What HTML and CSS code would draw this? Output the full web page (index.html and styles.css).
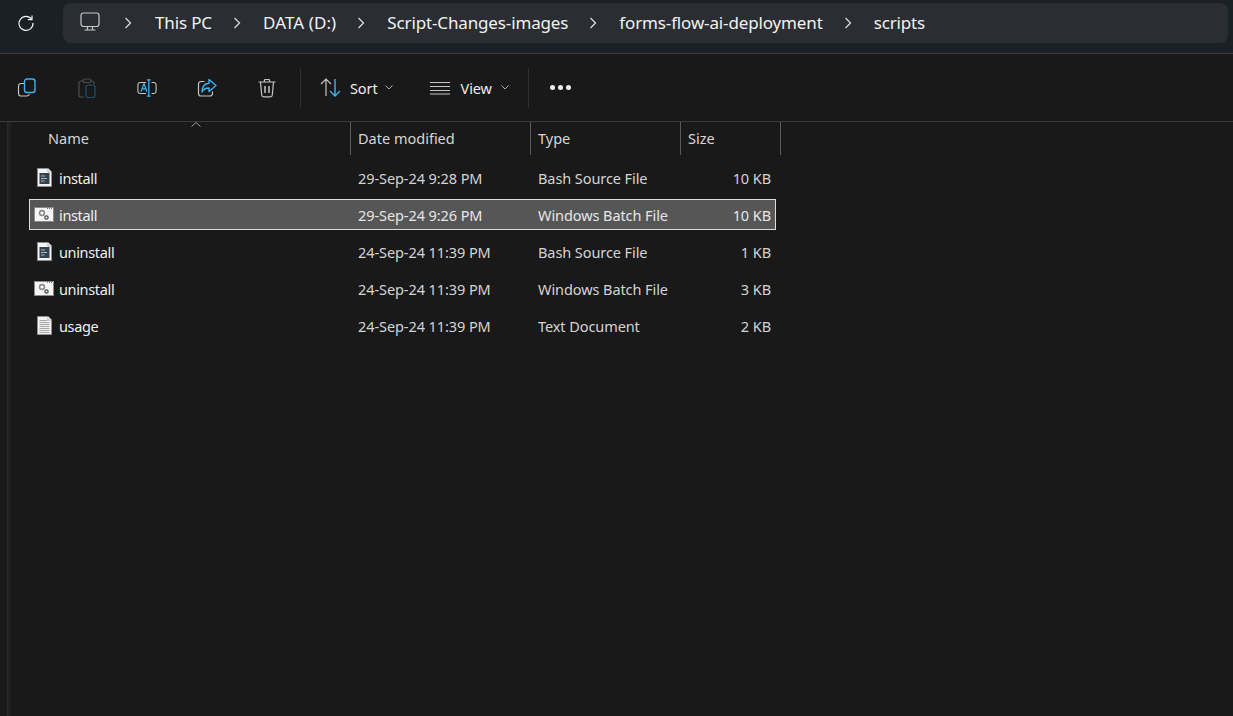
FILE: index.html
```html
<!DOCTYPE html>
<html lang="en">
<head>
<meta charset="utf-8">
<title>scripts</title>
<link rel="stylesheet" href="styles.css">
</head>
<body>
<div class="window">
  <header class="topbar">
    <button class="refresh" aria-label="Refresh">
      <svg width="18" height="18" viewBox="0 0 18 18" fill="none" stroke="#f0f0f0" stroke-width="1.2"><path d="M14.6 5.2A7 7 0 1 0 16 9"/><path d="M15 1.4v4.2h-4.2"/></svg>
    </button>
    <nav class="address">
      <svg class="pc" width="20" height="20" viewBox="0 0 20 20" fill="none" stroke="#c8c8c8" stroke-width="1.2"><rect x="1" y="1" width="18" height="13.5" rx="2.5"/><path d="M7.5 14.5v3M12.5 14.5v3M4.5 18h11"/></svg>
      <svg class="chev first" width="8" height="12" viewBox="0 0 8 12" fill="none" stroke="#d8d8d8" stroke-width="1.3"><path d="M1.5 1l5 5-5 5"/></svg>
      <span class="crumb">This PC</span>
      <svg class="chev" width="8" height="12" viewBox="0 0 8 12" fill="none" stroke="#d8d8d8" stroke-width="1.3"><path d="M1.5 1l5 5-5 5"/></svg>
      <span class="crumb drive">DATA (D:)</span>
      <svg class="chev" width="8" height="12" viewBox="0 0 8 12" fill="none" stroke="#d8d8d8" stroke-width="1.3"><path d="M1.5 1l5 5-5 5"/></svg>
      <span class="crumb">Script-Changes-images</span>
      <svg class="chev" width="8" height="12" viewBox="0 0 8 12" fill="none" stroke="#d8d8d8" stroke-width="1.3"><path d="M1.5 1l5 5-5 5"/></svg>
      <span class="crumb">forms-flow-ai-deployment</span>
      <svg class="chev" width="8" height="12" viewBox="0 0 8 12" fill="none" stroke="#d8d8d8" stroke-width="1.3"><path d="M1.5 1l5 5-5 5"/></svg>
      <span class="crumb">scripts</span>
    </nav>
  </header>

  <section class="toolbar">
    <div class="tool-group">
      <button class="tool" aria-label="Copy">
        <svg width="20" height="20" viewBox="0 0 20 20" fill="none" stroke-width="1.2"><path d="M7 5.500H3.500A2.500 2.500 0 0 0 1.500 8v7.500A2.500 2.500 0 0 0 3.500 18H10a2.500 2.500 0 0 0 2.400-2" stroke="#c4c4c4"/><rect x="7.500" y="1" width="10.500" height="13.500" rx="2.500" stroke="#3db2f5" stroke-width="1.400"/></svg>
      </button>
      <button class="tool" aria-label="Paste">
        <svg width="20" height="20" viewBox="0 0 20 20" fill="none" stroke-width="1.2"><path d="M7 3H4a2 2 0 0 0-2 2v12a2 2 0 0 0 2 2h3M13 3h2a2 2 0 0 1 2 2v1" stroke="#4d4d4d"/><rect x="6" y="1" width="8" height="3.500" rx="1.500" stroke="#4d4d4d"/><rect x="9" y="7" width="9" height="12.500" rx="2" stroke="#1d5370"/></svg>
      </button>
      <button class="tool" aria-label="Rename">
        <svg width="22" height="20" viewBox="0 0 22 20" fill="none" stroke-width="1.2"><path d="M10 4H3.500A2.500 2.500 0 0 0 1 6.500v7A2.500 2.500 0 0 0 3.500 16H10M16 4h2.500A2.500 2.500 0 0 1 21 6.500v7a2.500 2.500 0 0 1-2.500 2.500H16" stroke="#c4c4c4"/><path d="M11 1h4M13 1v18M11 19h4" stroke="#3db2f5" stroke-width="1.400"/><path d="M4.500 14l3-8.500h.4l3 8.500M5.500 11h4.800" stroke="#3db2f5" stroke-width="1.400"/></svg>
      </button>
      <button class="tool" aria-label="Share">
        <svg width="20" height="20" viewBox="0 0 20 20" fill="none" stroke-width="1.2"><path d="M7.500 3.500H4A2.500 2.500 0 0 0 1.500 6v9.500A2.500 2.500 0 0 0 4 18h9a2.500 2.500 0 0 0 2.500-2.500v-2" stroke="#c4c4c4"/><path d="M12 1.500l7 6-7 6V10c-3.500 0-5.500 1-7 4 0-5 2.500-8.500 7-8.800z" stroke="#3db2f5" stroke-width="1.400" stroke-linejoin="round"/></svg>
      </button>
      <button class="tool" aria-label="Delete">
        <svg width="18" height="20" viewBox="0 0 18 20" fill="none" stroke="#c4c4c4" stroke-width="1.2"><path d="M.5 4h17M6 4l.8-2.500h4.400L12 4M2.500 4l1.200 13a2 2 0 0 0 2 1.800h6.600a2 2 0 0 0 2-1.800L15.500 4"/><path d="M7 8v7M11 8v7" stroke-width="1.500"/></svg>
      </button>
    </div>
    <span class="divider"></span>
    <button class="menu sort">
      <svg width="21" height="19" viewBox="0 0 21 19" fill="none" stroke-width="1.2"><path d="M6 18V1M1 6l5-5 5 5" stroke="#c4c4c4"/><path d="M15 1v17M10 13l5 5 5-5" stroke="#3db2f5" stroke-width="1.400"/></svg>
      <span>Sort</span>
      <svg class="caret" width="8" height="5" viewBox="0 0 8 5" fill="none" stroke="#a8a8a8"><path d="M.5.500L4 4l3.500-3.500"/></svg>
    </button>
    <button class="menu view">
      <svg width="20" height="14" viewBox="0 0 20 14" fill="none" stroke="#c4c4c4"><path d="M0 1.500h20M0 5.500h20M0 9.500h20M0 13h20"/></svg>
      <span>View</span>
      <svg class="caret" width="8" height="5" viewBox="0 0 8 5" fill="none" stroke="#a8a8a8"><path d="M.5.500L4 4l3.500-3.500"/></svg>
    </button>
    <span class="divider"></span>
    <button class="more" aria-label="More options"><i></i><i></i><i></i></button>
  </section>

  <main class="files">
    <div class="rule"></div>
    <div class="list">
      <div class="head">
        <div class="col name">Name<svg class="sort-mark" width="10" height="5" viewBox="0 0 10 5" fill="none" stroke="#9a9a9a"><path d="M.5 4.500L5 .5l4.500 4"/></svg></div>
        <div class="col">Date modified</div>
        <div class="col">Type</div>
        <div class="col">Size</div>
      </div>

      <div class="row">
        <div class="cell name"><svg class="ficon" width="16" height="19" viewBox="0 0 16 19"><use href="#script"/></svg>install</div>
        <div class="cell">29-Sep-24 9:28 PM</div>
        <div class="cell">Bash Source File</div>
        <div class="cell size">10 KB</div>
      </div>
      <div class="row selected">
        <div class="cell name"><svg class="ficon wide" width="20" height="15" viewBox="0 0 20 15"><use href="#batch"/></svg>install</div>
        <div class="cell">29-Sep-24 9:26 PM</div>
        <div class="cell">Windows Batch File</div>
        <div class="cell size">10 KB</div>
      </div>
      <div class="row">
        <div class="cell name"><svg class="ficon" width="16" height="19" viewBox="0 0 16 19"><use href="#script"/></svg>uninstall</div>
        <div class="cell">24-Sep-24 11:39 PM</div>
        <div class="cell">Bash Source File</div>
        <div class="cell size">1 KB</div>
      </div>
      <div class="row">
        <div class="cell name"><svg class="ficon wide" width="20" height="15" viewBox="0 0 20 15"><use href="#batch"/></svg>uninstall</div>
        <div class="cell">24-Sep-24 11:39 PM</div>
        <div class="cell">Windows Batch File</div>
        <div class="cell size">3 KB</div>
      </div>
      <div class="row">
        <div class="cell name"><svg class="ficon" width="16" height="19" viewBox="0 0 16 19"><use href="#text"/></svg>usage</div>
        <div class="cell">24-Sep-24 11:39 PM</div>
        <div class="cell">Text Document</div>
        <div class="cell size">2 KB</div>
      </div>
    </div>
  </main>
</div>

<svg class="defs" width="0" height="0" aria-hidden="true">
  <defs>
    <g id="script">
      <path d="M.5 .5h10.500l3.500 3.500v14.500H.5z" fill="#f2f2f2" stroke="#8e8e8e"/>
      <path d="M11 .5v3.500h3.500" fill="#fff" stroke="#b0b0b0"/>
      <rect x="2.500" y="5" width="10" height="11" fill="#33444e"/>
      <path d="M4 8h4M4 10.500h6M4 13h3.500" stroke="#a9b6bd"/>
    </g>
    <g id="batch">
      <rect x=".5" y=".5" width="19" height="14" fill="#f4f4f4" stroke="#8a8a8a"/>
      <path d="M13 1.500h5.500" stroke="#777" stroke-dasharray="1 1"/>
      <circle cx="8" cy="6" r="2.400" fill="#fff" stroke="#8b8b8b" stroke-width="1.600"/>
      <circle cx="12.500" cy="10.500" r="1.600" fill="#fff" stroke="#4a4a4a" stroke-width="1.300"/>
    </g>
    <g id="text">
      <path d="M.5 .5h10.500l3.500 3.500v14.500H.5z" fill="#f2f2f2" stroke="#8e8e8e"/>
      <path d="M11 .5v3.500h3.500" fill="#fff" stroke="#b0b0b0"/>
      <path d="M2.500 4.500h8M2.500 6.500h10M2.500 8.500h10M2.500 10.500h10M2.500 12.500h10M2.500 14.500h10M2.500 16.500h10" stroke="#a6a6a6"/>
    </g>
  </defs>
</svg>
</body>
</html>
```
FILE: styles.css
```css
* { box-sizing: border-box; }
html, body { margin: 0; height: 100%; }
body {
  background: #191919;
  color: #e6e6e6;
  font-family: "Noto Sans", "Open Sans", sans-serif;
  font-size: 14.5px;
  overflow: hidden;
}
button {
  background: none;
  border: 0;
  padding: 0;
  color: inherit;
  font: inherit;
  display: flex;
  align-items: center;
}
.window { display: flex; flex-direction: column; height: 716px; }

.topbar {
  height: 54px;
  flex: none;
  display: flex;
  align-items: flex-start;
  padding: 3px 5px 0 17px;
  background: #1b1f26;
  border-bottom: 1px solid #3b3b3b;
}
.refresh { width: 18px; height: 40px; margin-right: 28px; }
.address {
  flex: 1;
  height: 40px;
  display: flex;
  align-items: center;
  padding-left: 17px;
  border-radius: 8px;
  background: #2a2d31;
}
.pc { margin-top: -2px; }
.chev { margin: 0 22px 0 21px; flex: none; }
.chev.first { margin-left: 24px; margin-right: 23px; }
.crumb { font-size: 17px; letter-spacing: -.14px; color: #f2f2f2; white-space: nowrap; margin-top: -1px; }
.crumb.drive { letter-spacing: .1px; }

.toolbar {
  height: 68px;
  flex: none;
  display: flex;
  align-items: center;
  padding-left: 17px;
  background: #191919;
  border-bottom: 1px solid #3b3b3b;
}
.tool-group { display: flex; gap: 40px; align-items: center; }
.tool { height: 24px; width: 20px; justify-content: center; }
.divider { width: 1px; height: 40px; background: #303030; flex: none; }
.tool-group + .divider { margin-left: 23px; }
.menu { gap: 9px; height: 32px; color: #ececec; letter-spacing: -.1px; }
.sort { margin-left: 19px; }
.sort .caret { margin-left: -2px; }
.view { margin-left: 37px; }
.view span { margin-left: 2px; }
.view + .divider { margin-left: 19px; }
.more { gap: 3px; margin-left: 21px; }
.more i { width: 5px; height: 5px; border-radius: 50%; background: #f0f0f0; }

.files { flex: 1; display: flex; }
.rule { width: 4px; margin-left: 7px; background: #212121; border-left: 1px solid #2b2b2b; }
.list { margin-left: 18px; width: 752px; display: flex; flex-direction: column; }
.head, .row { display: grid; }
.head {
  grid-template-columns: 322px 180px 150px 100px;
  height: 33px;
  color: #d6d6d6;
  margin-bottom: 7px;
}
.col {
  position: relative;
  display: flex;
  align-items: center;
  padding: 0 0 2px 7px;
  border-right: 1px solid #5a5a5a;
}
.col.name { padding-left: 19px; }
.sort-mark { position: absolute; left: 162px; top: 0; }
.row {
  height: 31px;
  margin-bottom: 6px;
  width: 747px;
  grid-template-columns: 321px 180px 150px 94px;
  letter-spacing: -.08px;
  color: #d4d4d4;
  border: 1px solid transparent;
}
.row.selected { background: #565656; border-color: #dcdcdc; color: #e6e6e6; }
.cell { display: flex; align-items: center; padding-left: 7px; white-space: nowrap; }
.cell.name { padding-left: 29px; position: relative; color: #f0f0f0; letter-spacing: -.35px; }
.cell.size { justify-content: flex-end; padding-right: 4px; }
.ficon { position: absolute; left: 7px; top: 5px; }
.ficon.wide { left: 4px; top: 7px; }
.defs { position: absolute; }
```
